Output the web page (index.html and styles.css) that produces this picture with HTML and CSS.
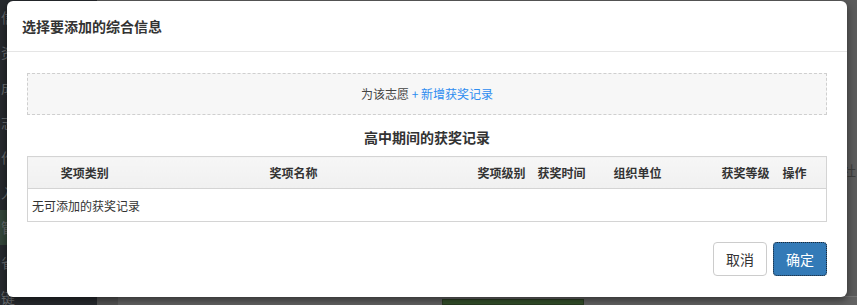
FILE: index.html
```html
<!DOCTYPE html>
<html lang="zh-CN">
<head>
<meta charset="UTF-8">
<meta name="viewport" content="width=device-width, initial-scale=1.0">
<title>选择要添加的综合信息</title>
<link rel="stylesheet" href="styles.css">
</head>
<body>
<div class="page">
    <ul class="sidebar">
        <li>信息</li>
        <li>资料</li>
        <li>成绩</li>
        <li>志愿</li>
        <li>作品</li>
        <li>入学</li>
        <li class="active">管理</li>
        <li>省份</li>
        <li>键</li>
    </ul>
    <div class="main">
        <div class="main-body">
            <span class="main-text">社</span>
        </div>
        <div class="main-foot">
            <span class="foot-left"></span>
            <span class="foot-btn"></span>
        </div>
    </div>
</div>

<div class="modal">
    <div class="modal-header">
        <h4 class="modal-title">选择要添加的综合信息</h4>
    </div>
    <div class="modal-body">
        <div class="add-box">为该志愿 <a href="#">+ 新增获奖记录</a></div>
        <h5 class="section-title">高中期间的获奖记录</h5>
        <table class="award-table">
            <colgroup>
                <col style="width:114px">
                <col style="width:304px">
                <col style="width:88px">
                <col style="width:56px">
                <col style="width:96px">
                <col style="width:92px">
                <col>
            </colgroup>
            <thead>
                <tr>
                    <th class="c">奖项类别</th>
                    <th class="c">奖项名称</th>
                    <th class="r">奖项级别</th>
                    <th class="c">获奖时间</th>
                    <th class="c">组织单位</th>
                    <th class="r">获奖等级</th>
                    <th class="l">操作</th>
                </tr>
            </thead>
            <tbody>
                <tr>
                    <td colspan="7">无可添加的获奖记录</td>
                </tr>
            </tbody>
        </table>
    </div>
    <div class="modal-footer">
        <button class="btn btn-default">取消</button>
        <button class="btn btn-primary">确定</button>
    </div>
</div>
</body>
</html>
```

FILE: styles.css
```css
body {
    margin: 0;
    width: 857px;
    height: 305px;
    overflow: hidden;
    font-family: "Noto Sans CJK SC", "Liberation Sans", sans-serif;
    font-size: 12px;
    color: #333;
}

.page {
    display: flex;
    height: 305px;
}

.sidebar {
    width: 97px;
    margin: 0;
    padding: 0;
    list-style: none;
    background-color: #272a2e;
}

.sidebar li {
    height: 35px;
    line-height: 35px;
    padding-left: 1px;
    font-size: 14px;
    color: #66696c;
    white-space: nowrap;
}

.sidebar li.active {
    background-color: #34463a;
}

.main {
    flex: 1;
    display: flex;
    flex-direction: column;
    background-color: #5c5c5c;
}

.main-body {
    flex: 1;
    display: flex;
    justify-content: flex-end;
    padding-top: 160px;
    padding-right: 1px;
}

.main-text {
    font-size: 14px;
    color: #3e3e3e;
}

.main-foot {
    height: 8px;
    display: flex;
    border-top: 1px solid #767676;
    background-color: #636363;
}

.foot-left {
    width: 21px;
    background-color: #545454;
}

.foot-btn {
    width: 140px;
    margin-left: 324px;
    margin-top: 2px;
    background-color: #34502a;
    border: 1px solid #2a3c22;
}

/* modal */
.modal {
    position: absolute;
    left: 7px;
    top: 1px;
    width: 840px;
    background-color: #fff;
    border-radius: 6px;
    box-shadow: 0 3px 9px rgba(0, 0, 0, 0.5);
}

.modal-header {
    padding: 15px;
    border-bottom: 1px solid #e5e5e5;
}

.modal-title {
    margin: 0;
    font-size: 14px;
    line-height: 20px;
    font-weight: bold;
    color: #333;
}

.modal-body {
    padding: 21px 20px 0 20px;
}

.add-box {
    height: 40px;
    line-height: 40px;
    text-align: center;
    background-color: #f7f7f7;
    border: 1px dashed #cfcfcf;
    color: #444;
}

.add-box a {
    color: #2d8cf0;
    text-decoration: none;
}

.section-title {
    margin: 12px 0 9px 0;
    font-size: 14px;
    line-height: 20px;
    font-weight: bold;
    text-align: center;
    color: #333;
}

.award-table {
    width: 100%;
    border-collapse: collapse;
    table-layout: fixed;
    border: 1px solid #d4d4d4;
}

.award-table th {
    height: 31px;
    padding: 0;
    font-weight: bold;
    color: #333;
    white-space: nowrap;
    background: linear-gradient(#f6f6f6, #f0f0f0);
    border-bottom: 1px solid #d4d4d4;
}

.award-table th.c {
    text-align: center;
}

.award-table th.r {
    text-align: right;
    padding-right: 8px;
}

.award-table th.l {
    text-align: left;
    padding-left: 5px;
}

.award-table td {
    height: 32px;
    padding: 0 4px;
    color: #333;
}

.modal-footer {
    display: flex;
    justify-content: flex-end;
    gap: 6px;
    padding: 20px 20px 21px 20px;
}

.btn {
    padding: 6px 12px;
    font-family: inherit;
    font-size: 14px;
    line-height: 20px;
    border-radius: 4px;
    border: 1px solid #ccc;
    cursor: pointer;
}

.btn-default {
    background-color: #fff;
    color: #333;
}

.btn-primary {
    background-color: #337ab7;
    border-color: #2e6da4;
    color: #fff;
    outline: 1px dotted #1a2a3a;
    outline-offset: -1px;
}
```
